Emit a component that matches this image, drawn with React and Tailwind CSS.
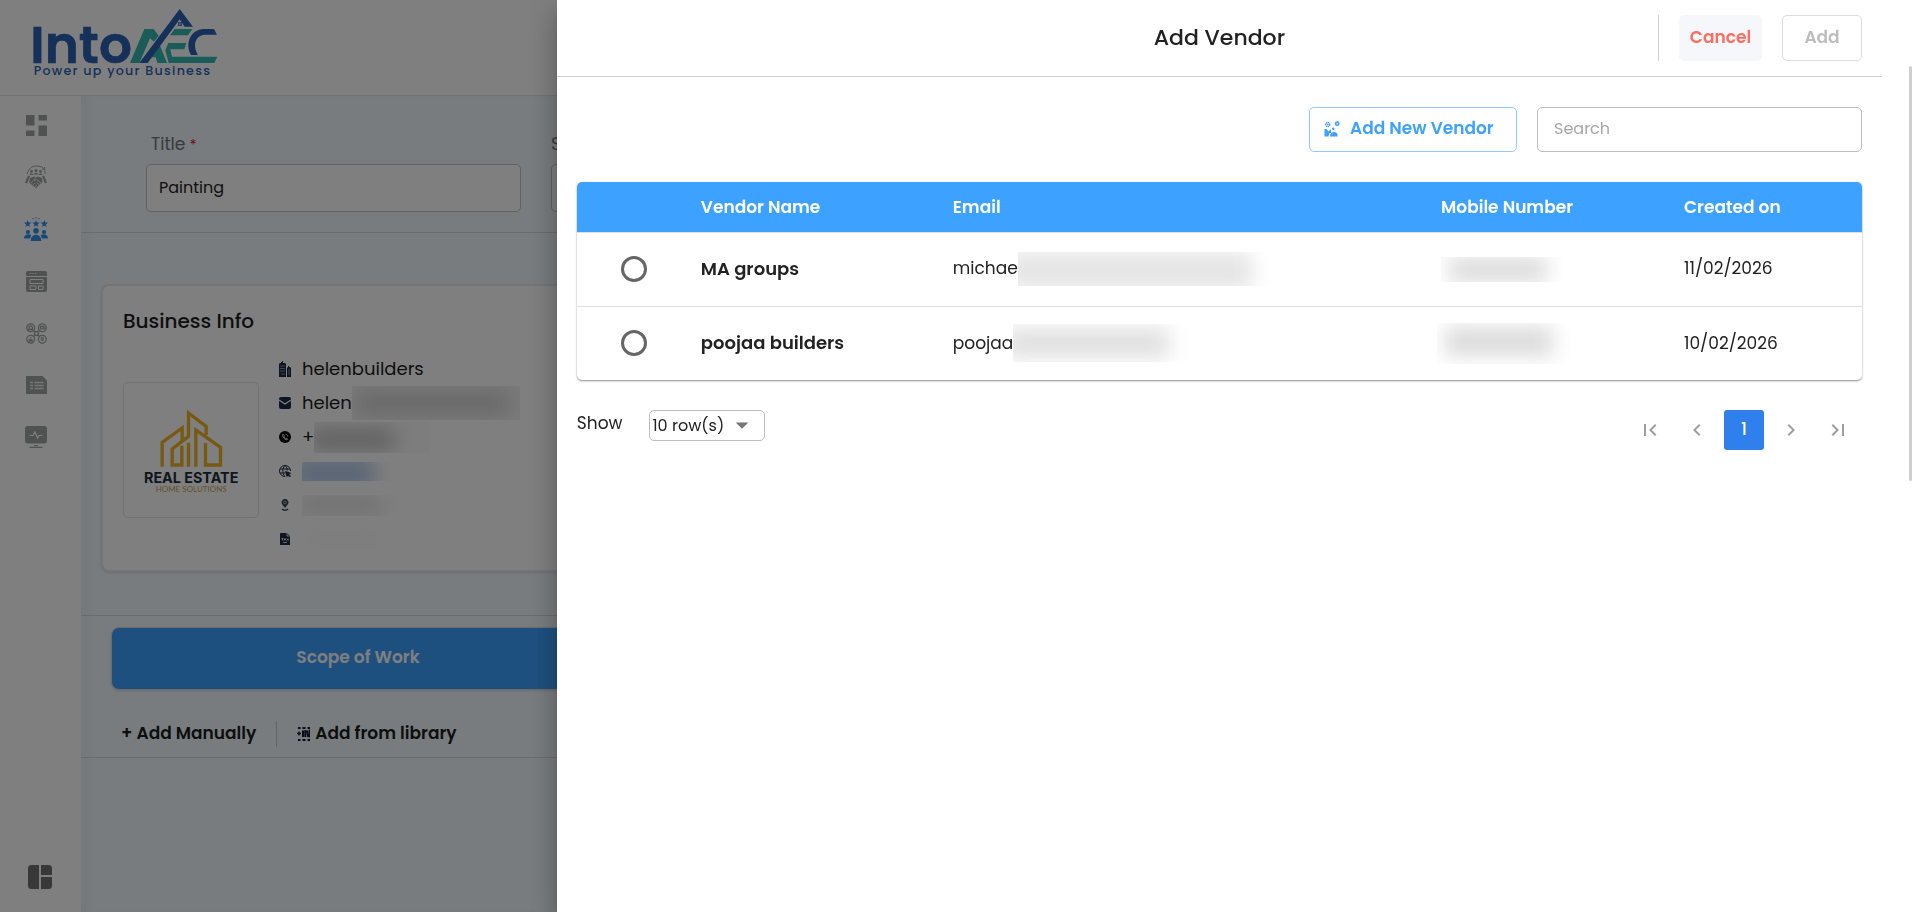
import { useState } from 'react'
import { MdFirstPage, MdLastPage, MdChevronLeft, MdChevronRight, MdArrowDropDown } from 'react-icons/md'

function BrandLogo() {
  return (
    <svg viewBox="90 15 570 225" className="w-[190px] h-[75px]" role="img" aria-label="IntoAEC">
      <text x="91" y="188" fontSize="155" fontWeight="600" fill="#2b63b4" stroke="#2b63b4" strokeWidth="2" fontFamily="Poppins, Inter, sans-serif">Into</text>
      <g fill="#34b8ae">
        <path d="M390 189 433 87h28l15 20-14 18-12-10-32 74z" />
        <path d="m474 122 27 67h-29l-5-17h-22l14-19h10l-6-14z" />
        <path d="M524 87h53l-13 19h-54zM505 129h54l-6 19h-42l5 22h136l-9 19H506l-10-38z" />
      </g>
      <g fill="#2b63b4">
        <path d="m418 189 121-162 40 53h-25l-15-22-96 131z" />
        <path d="m651 104-9-17h-31c-40 2-57 44-38 78h21c-16-28-10-58 20-61z" />
        <path d="M534 66h5v5h-5zM541 66h5v5h-5zM534 73h5v5h-5zM541 73h5v5h-5z" />
      </g>
      <text x="101" y="225" fontSize="38" fontWeight="500" fill="#2b63b4" fontFamily="Poppins, Inter, sans-serif" className="tracking-widest">Power up your Business</text>
    </svg>
  )
}

function DashboardIcon() {
  return (
    <svg viewBox="0 0 21 21" className="w-[21px] h-[21px]" fill="currentColor">
      <rect width="8.500" height="10.500" rx=".6" />
      <rect x="12.500" width="8.500" height="5.500" rx=".6" />
      <rect y="15.500" width="8.500" height="5.500" rx=".6" />
      <rect x="12.500" y="10.500" width="8.500" height="10.500" rx=".6" />
    </svg>
  )
}

function PartnersIcon() {
  return (
    <svg viewBox="0 0 24 24" className="w-6 h-6" fill="currentColor">
      <path d="M3 9C5 3 8 1 12 1c4 0 7 1 8 3M21 9c0-2 0-3-1-5l1-2M20 4l-2 0" fill="none" stroke="currentColor" />
      <circle cx="7.500" cy="6.500" r="1.400" />
      <circle cx="12" cy="5.500" r="1.500" />
      <circle cx="16.500" cy="6.500" r="1.400" />
      <path d="M5.500 10c0-2 4-2 4 0zM10 9.500c0-2.500 4-2.500 4 0zM14.500 10c0-2 4-2 4 0zM4 10.500l2 1-3 7-2-1zM20 10.500l-2 1 3 7 2-1z" />
      <path d="M6 13l4-1.500 2 .8 2-.8 4 1.500.5 4-6.500 6L5 17.500z" />
      <path d="M12 12.500 9.500 15c1 1 2 .5 3-.5l5 4M7 18l2-2M9 20l2-2M11 22l2-2M13 18l2.500 2" fill="none" stroke="#fff" strokeWidth=".8" />
    </svg>
  )
}

function VendorsIcon() {
  const star = 'M0-3.600 1-1.100l2.700.1L1.600.8l.7 2.600L0 1.900l-2.300 1.500.7-2.600L-3.700-1-1-1.100z'
  return (
    <svg viewBox="0 0 24 24" className="w-6 h-6" fill="currentColor">
      <path d={star} transform="translate(3.700 6.600)" />
      <path d={star} transform="translate(12 6.600)" />
      <path d={star} transform="translate(20.300 6.600)" />
      <path d="M12 .300v1.500M8.500 1l.8 1.300M15.500 1l-.8 1.300" stroke="currentColor" />
      <circle cx="3.900" cy="15" r="2.100" />
      <circle cx="20.100" cy="15" r="2.100" />
      <circle cx="12" cy="13.800" r="2.800" />
      <path d="M0 21.500c0-5 6.500-5 7.200-3L6 21.500zM24 21.500c0-5-6.500-5-7.200-3l1.200 3zM6.700 24c0-8.500 10.600-8.500 10.600 0z" />
    </svg>
  )
}

function LayoutIcon() {
  return (
    <svg viewBox="0 0 21 21" className="w-[21px] h-[21px]">
      <path d="M2 0h17a2 2 0 0 1 2 2v17a2 2 0 0 1-2 2H2a2 2 0 0 1-2-2V2a2 2 0 0 1 2-2z" fill="currentColor" />
      <path d="M0 5.500h21M4 2.500h1.200M6.500 2.500h1.200M9 2.500h1.200" stroke="#fff" />
      <path d="M4 8.500h13v4H4zM4 15h6v3.500H4zM12.500 15H17v3.500h-4.500z" fill="none" stroke="#fff" />
    </svg>
  )
}

function NetworkIcon() {
  return (
    <svg viewBox="0 0 21 21" className="w-[21px] h-[21px]" fill="none" stroke="currentColor" strokeWidth="1.300">
      <circle cx="4.700" cy="4.700" r="3.900" />
      <circle cx="16.300" cy="4.700" r="3.900" />
      <circle cx="4.700" cy="16.300" r="3.900" />
      <circle cx="16.300" cy="16.300" r="3.900" />
      <circle cx="10.500" cy="10.500" r="2" />
      <path d="m7.500 7.500 1.500 1.500m4.500-1.500L12 9M7.500 13.500 9 12m4.500 1.500L12 12" />
      <path d="M3 6.500V4l1.700-1.500L6.400 4v2.500zM14.500 3.500h3.600v2.400h-3.600zM3 18c0-2.500 3.400-2.500 3.400 0zM4.700 14v1M14.800 15h3M14.800 17h3" />
    </svg>
  )
}

function SheetIcon() {
  return (
    <svg viewBox="0 0 21 18" className="w-[21px] h-[18px]">
      <path d="M0 0h16.500L21 4.500V18H0z" fill="currentColor" />
      <path d="M4 6.500h3M4 9.500h3M4 12.500h3M8.500 6.500h9M8.500 9.500h9M8.500 12.500h9" stroke="#fff" strokeWidth="1.500" opacity=".8" />
    </svg>
  )
}

function MonitorIcon() {
  return (
    <svg viewBox="0 0 22 22" className="w-[22px] h-[22px]" fill="none">
      <rect width="22" height="17.500" rx="2.500" fill="currentColor" />
      <path d="M4.500 9.500h3.500l2-3.500 2.500 6 1.500-2.500h3.500" stroke="#fff" strokeWidth="1.200" />
      <path d="M9 19.500h4M4.500 21.300h13" stroke="currentColor" strokeWidth="1.200" />
    </svg>
  )
}

function PanelIcon() {
  return (
    <svg viewBox="0 0 24 24" className="w-6 h-6" fill="currentColor">
      <path d="M3.500 0H11v24H3.500A3.500 3.500 0 0 1 0 20.500v-17A3.500 3.500 0 0 1 3.500 0zM13 0h7.500A3.500 3.500 0 0 1 24 3.500V10H13zM13 12h11v8.500a3.500 3.500 0 0 1-3.500 3.500H13z" />
    </svg>
  )
}

function CompanyLogo() {
  return (
    <svg viewBox="150 400 305 270" className="w-[102px] h-[90px]" role="img" aria-label="Real Estate Home Solutions">
      <g fill="none" stroke="#f0b323" strokeWidth="10">
        <path d="M216 585v-73l60-43v38" />
        <path d="M275 522v58h-29v-48l49-38v-70l53 40v26" />
        <path d="M295 585v-72M317 585V475l74 52v53h-45v-66" />
      </g>
      <text x="303" y="633" fontSize="43" fontWeight="700" textAnchor="middle" fill="#1c2f3d" fontFamily="Inter, sans-serif">REAL ESTATE</text>
      <text x="303" y="660" fontSize="24" textAnchor="middle" fill="#c8a458" fontFamily="Lato, sans-serif">HOME SOLUTIONS</text>
    </svg>
  )
}

function BuildingIcon() {
  return (
    <svg viewBox="0 0 12 16" className="w-3 h-4">
      <path d="M0 16V3l1-1h1V1h1V0h1v2h2l1 1v13zM8 16V7l1-1V5h1v1h1l1 1v9z" fill="#1d2b45" />
      <path d="M1 5h5M1 7.500h5M1 10h5M9 9h2M9 11h2M2 13h4M9 13h2" stroke="#8f9aad" strokeWidth=".9" />
    </svg>
  )
}

function MailIcon() {
  return (
    <svg viewBox="0 0 12 12" className="w-3 h-3">
      <rect width="12" height="12" rx="2" fill="#1d2b45" />
      <path d="m0 3 6 4 6-4" fill="none" stroke="#fff" strokeWidth="1.200" />
    </svg>
  )
}

function PhoneIcon() {
  return (
    <svg viewBox="0 0 12 12" className="w-3 h-3">
      <circle cx="6" cy="6" r="6" />
      <path d="M4 3.300c-.8.8 0 3 1.200 4.200S8 9.300 8.700 8.300L7.400 7l-.9.400c-.7-.4-1.200-1-1.400-1.700l.5-.8zM6.500 3.200c1.300 0 2.300 1 2.300 2.400" fill="none" stroke="#fff" strokeWidth=".9" />
    </svg>
  )
}

function WebIcon() {
  return (
    <svg viewBox="0 0 12 12" className="w-3 h-3" fill="none" stroke="#1d2b45">
      <path d="M11.500 6A5.500 5.500 0 1 0 6 11.500M6 .500c-3 3-3 8 0 11M6 .500c1.500 1.500 2.200 3 2.300 5M1 4h10M1 8h5" />
      <path d="m6.500 6.500 5 1.800-2 .9 2 2-.8.700-2-2-.7 1.500z" fill="#1d2b45" />
    </svg>
  )
}

function PinIcon() {
  return (
    <svg viewBox="0 0 12 12" className="w-3 h-3">
      <path d="M6 9 3.300 5.500a3.400 3.400 0 1 1 5.400 0z" fill="#3c4558" />
      <circle cx="6" cy="3.500" r="1.300" fill="none" stroke="#b9c0cc" strokeWidth=".8" />
      <path d="M3 10c1.500 1.600 4.500 1.600 6 0" fill="none" stroke="#3c4558" strokeWidth="1.500" />
    </svg>
  )
}

function TaxIcon() {
  return (
    <svg viewBox="0 0 12 12" className="w-3 h-3">
      <path d="M2 0h6l3 3v9H1V1q0-1 1-1z" fill="#1d2b45" />
      <path d="M8 0v3h3M2.500 5.500h2M3.500 5.500v2M5 7.500l1-2 1 2M8 5.500l1.500 2M9.500 5.500 8 7.500M4 9.500h4" fill="none" stroke="#fff" strokeWidth=".8" />
    </svg>
  )
}

function LibraryIcon() {
  return (
    <svg viewBox="0 0 13 14" className="w-[13px] h-[14px]" fill="none" stroke="#111a2b">
      <path d="M1 1h2.500M5.500 1h3M10.500 1h2.500M1 13h2.500M5.500 13h3M10.500 13h2.500" strokeWidth="2" />
      <path d="M0 6.500h4M2 4.500v4" strokeWidth="1.400" />
      <path d="M6 3.500v6.500M8.300 3v7M10.200 3.500l1 6.500" strokeWidth="2" />
      <path d="M12.400 2.500v8" strokeWidth="1.200" />
    </svg>
  )
}

function AddVendorIcon() {
  return (
    <svg viewBox="0 0 16 16" className="w-4 h-4" fill="currentColor">
      <circle cx="3.700" cy="3.500" r="2" fill="none" stroke="currentColor" strokeWidth="1.500" strokeDasharray="1.200 .5" />
      <circle cx="3.700" cy="3.500" r=".8" />
      <circle cx="13.200" cy="2.700" r="1.600" fill="none" stroke="currentColor" strokeWidth="1.600" />
      <circle cx="9.300" cy="7.700" r="1.200" />
      <path d="M.500 8h2l2 2.500L7 8v4h-1.500l-1 3.500h-4zM6 15.500c0-5.500 7-5.500 7.500-2v2z" />
    </svg>
  )
}

// masked-out personal data: a soft bar inside a clipped box
function Redacted({ className, bar }) {
  return (
    <span className={`block overflow-hidden ${className}`}>
      <span className={`block blur-[10px] ${bar}`}></span>
    </span>
  )
}

const navItems = [
  { key: 'dashboard', label: 'Dashboard', icon: DashboardIcon },
  { key: 'partners', label: 'Partners', icon: PartnersIcon },
  { key: 'vendors', label: 'Vendors', icon: VendorsIcon, active: true },
  { key: 'layouts', label: 'Layouts', icon: LayoutIcon },
  { key: 'network', label: 'Network', icon: NetworkIcon },
  { key: 'sheets', label: 'Sheets', icon: SheetIcon },
  { key: 'activity', label: 'Activity', icon: MonitorIcon }
]

const businessInfo = [
  { key: 'name', icon: BuildingIcon, text: 'helenbuilders' },
  { key: 'mail', icon: MailIcon, text: 'helen', box: 'w-[168px] h-[34px] bg-[#f4f4f4]', bar: 'w-[152px] h-[18px] mt-2 ml-1 bg-[#c9c9c9]' },
  { key: 'phone', icon: PhoneIcon, text: '+', box: 'w-[115px] h-[31px] bg-[#fbfbfb]', bar: 'w-[84px] h-[19px] mt-2 -ml-1 bg-[#bcbcbc]' },
  { key: 'web', icon: WebIcon, box: 'w-[88px] h-[19px]', bar: 'w-[80px] h-[31px] -mt-1 -ml-2 bg-[#b4caec]' },
  { key: 'address', icon: PinIcon, box: 'w-[104px] h-[21px]', bar: 'w-[84px] h-[13px] mt-1 -ml-1 bg-[#d6d6d6]' },
  { key: 'tax', icon: TaxIcon, box: 'w-[96px] h-[21px]', bar: 'w-[80px] h-[13px] mt-1 bg-[#fafafa]' }
]

const vendors = [
  {
    id: 'ma',
    name: 'MA groups',
    email: 'michae',
    emailBox: 'w-[250px] h-[34px]',
    emailBar: 'w-[246px] h-[38px] -ml-3 bg-[#e5e5e5]',
    phoneBox: 'w-[120px] h-[25px]',
    phoneBar: 'w-[98px] h-[25px] ml-2 bg-[#dbdbdb]',
    created: '11/02/2026'
  },
  {
    id: 'poojaa',
    name: 'poojaa builders',
    email: 'poojaa',
    emailBox: 'w-[184px] h-[38px]',
    emailBar: 'w-[164px] h-[30px] mt-1 -ml-2 bg-[#e0e0e0]',
    phoneBox: '-ml-1 w-[134px] h-[41px]',
    phoneBar: 'w-[108px] h-[29px] ml-2 mt-1 bg-[#dbdbdb]',
    created: '10/02/2026'
  }
]

function Page() {
  return (
    <div className="min-h-screen flex flex-col bg-white">
      <header className="h-24 border-b border-[#e6e6e6] pl-[30px] pt-[5px]">
        <BrandLogo />
      </header>

      <div className="flex flex-1">
        <nav className="w-[81px] shrink-0 flex flex-col pt-[3px] bg-white">
          {navItems.map((item) => {
            const Icon = item.icon
            return (
              <button
                key={item.key}
                aria-label={item.label}
                className={`h-[52px] w-[72px] flex items-center justify-center ${item.active ? 'text-[#3090f0]' : 'text-[#a0a4a3]'}`}
              >
                <Icon />
              </button>
            )
          })}
          <button aria-label="Toggle panel" className="mt-auto mb-[11px] h-12 w-20 flex items-center justify-center text-[#707070]">
            <PanelIcon />
          </button>
        </nav>

        <main className="flex-1 min-w-0 bg-[#f2f9fd] shadow-[inset_12px_0_16px_-8px_#e3edf5]">
          {/* Title row */}
          <div className="grid grid-cols-4 gap-[30px] pl-[65px] pr-[184px] pt-9 pb-5 border-b border-[#d2d7da]">
            <div className="flex flex-col gap-2">
              <label htmlFor="title" className="pl-[5px] text-[17px] leading-6 text-[#70757a]">
                Title <span className="text-sm text-[#e0102c]">*</span>
              </label>
              <input id="title" defaultValue="Painting" className="h-12 w-full rounded-[5px] border border-[#c4c4c4] bg-white px-3 pb-[2px] text-base text-[#222]" />
            </div>
            <div className="flex flex-col gap-2">
              <label htmlFor="status" className="text-[17px] leading-6 text-[#70757a]">Status</label>
              <input id="status" className="h-12 w-full rounded-[5px] border border-[#c4c4c4] bg-white px-3 pb-[2px] text-base" />
            </div>
          </div>

          {/* Business card */}
          <div className="px-5 pt-[51px] pb-[43px] border-b border-[#d2d7da]">
            <div className="rounded-lg border-2 border-[#e9e9e9] bg-white px-5 pt-5 pb-[14px] shadow-sm">
              <h2 className="text-xl leading-[30px] font-medium text-[#1c1c1c]">Business Info</h2>
              <div className="mt-4 flex items-start gap-5">
                <div className="mt-[30px] w-[136px] h-[136px] rounded-[5px] border border-[#e2e2e2] flex items-center justify-center">
                  <CompanyLogo />
                </div>
                <ul>
                  {businessInfo.map((row) => {
                    const Icon = row.icon
                    return (
                      <li key={row.key} className="h-[34px] flex items-center gap-[11px]">
                        <Icon />
                        <span className="flex items-center text-lg text-[#1c1c1c]">
                          {row.text}
                          {row.box && <Redacted className={row.box} bar={row.bar} />}
                        </span>
                      </li>
                    )
                  })}
                </ul>
              </div>
            </div>
          </div>

          {/* Scope of work */}
          <div className="border-b border-[#d2d7da] pl-[30px] pt-[11px]">
            <button className="w-[494px] h-[63px] pb-[2px] rounded-lg border border-[#d8d8d8] bg-[#3da1ff] text-[17px] font-semibold text-white shadow-sm">Scope of Work</button>
            <div className="h-[47px] mt-5 flex items-center pl-[10px] text-[17px] font-semibold text-[#1c1c1c]">
              <button className="pr-5">+ Add Manually</button>
              <span className="h-[26px] w-px bg-[#c4c9cc]"></span>
              <button className="ml-5 flex items-center gap-[5px]">
                <LibraryIcon />
                Add from library
              </button>
            </div>
          </div>
        </main>
      </div>
    </div>
  )
}

function VendorTable({ selected, onSelect }) {
  return (
    <div className="mt-[30px] rounded-[5px] overflow-hidden shadow-[0_1px_2px_rgba(0,0,0,0.45)]">
      <table className="w-full table-fixed text-left">
        <thead>
          <tr className="h-[50px] bg-[#3da1ff] text-[17px] leading-6 text-white">
            <th className="w-[124px]"><span className="sr-only">Select</span></th>
            <th className="w-[252px] font-semibold">Vendor Name</th>
            <th className="font-semibold">Email</th>
            <th className="w-[243px] font-semibold">Mobile Number</th>
            <th className="w-[178px] font-semibold">Created on</th>
          </tr>
        </thead>
        <tbody>
          {vendors.map((vendor) => (
            <tr key={vendor.id} className="h-[74px] border-t border-[#e0e0e0] text-[17px] text-[#222]">
              <td>
                <input
                  type="radio"
                  name="vendor"
                  aria-label={vendor.name}
                  checked={selected === vendor.id}
                  onChange={() => onSelect(vendor.id)}
                  className="block ml-[44px] w-[26px] h-[26px] appearance-none rounded-full border-[3px] border-[#666] checked:bg-[#3da1ff]"
                />
              </td>
              <td className="text-lg leading-6 font-semibold">{vendor.name}</td>
              <td>
                <div className="flex items-center">
                  {vendor.email}
                  <Redacted className={vendor.emailBox} bar={vendor.emailBar} />
                </div>
              </td>
              <td>
                <Redacted className={vendor.phoneBox} bar={vendor.phoneBar} />
              </td>
              <td>{vendor.created}</td>
            </tr>
          ))}
        </tbody>
      </table>
    </div>
  )
}

function Pagination() {
  return (
    <div className="flex gap-[7px] pr-1 text-[#9e9e9e]">
      <button aria-label="First page" className="w-10 h-10 flex items-center justify-center"><MdFirstPage className="w-6 h-6" /></button>
      <button aria-label="Previous page" className="w-10 h-10 flex items-center justify-center"><MdChevronLeft className="w-6 h-6" /></button>
      <button className="w-10 h-10 rounded-[3px] bg-[#2f80ed] text-[17px] font-medium text-white">1</button>
      <button aria-label="Next page" className="w-10 h-10 flex items-center justify-center"><MdChevronRight className="w-6 h-6" /></button>
      <button aria-label="Last page" className="w-10 h-10 flex items-center justify-center"><MdLastPage className="w-6 h-6" /></button>
    </div>
  )
}

function AddVendorDrawer() {
  const [selected, setSelected] = useState(null)

  return (
    <aside className="fixed inset-y-0 right-0 w-[71%] flex bg-white shadow-[0_8px_10px_-5px_rgba(0,0,0,0.2),0_16px_24px_2px_rgba(0,0,0,0.14),0_6px_30px_5px_rgba(0,0,0,0.12)]">
      <div className="flex-1 min-w-0">
        {/* Header */}
        <div className="h-[77px] grid grid-cols-[1fr_auto_1fr] items-center border-b border-[#cfcfcf]">
          <span></span>
          <h1 className="pb-[2px] text-[22px] font-medium text-[#222]">Add Vendor</h1>
          <div className="flex items-center justify-end gap-5 pr-5">
            <span className="w-px h-[46px] bg-[#cfcfcf]"></span>
            <button className="w-[83px] h-[46px] rounded-[5px] bg-[#f5f7fb] text-[17px] font-semibold text-[#ff6b5e]">Cancel</button>
            <button className="w-20 h-[46px] rounded-[5px] border border-[#dcdcdc] text-[17px] font-semibold text-[#bdbdbd]">Add</button>
          </div>
        </div>

        <div className="px-5 pt-[30px]">
          <div className="flex justify-end gap-5">
            <button className="w-[208px] h-[45px] pl-[14px] pb-[2px] flex items-center gap-[10px] rounded-[5px] border border-[#90caff] text-[17px] font-semibold text-[#3da1ff]">
              <AddVendorIcon />
              Add New Vendor
            </button>
            <input type="search" aria-label="Search" placeholder="Search" className="w-[325px] h-[45px] px-4 pb-[2px] rounded-[5px] border border-[#bdbdbd] text-base placeholder:text-[#a6a6a6]" />
          </div>

          <VendorTable selected={selected} onSelect={setSelected} />

          {/* Footer */}
          <div className="mt-[30px] flex items-start justify-between">
            <div className="flex items-start gap-[26px] text-[17px] text-[#222]">
              <label htmlFor="rows" className="leading-[26px]">Show</label>
              <div className="relative">
                <select id="rows" className="w-[116px] h-[31px] appearance-none rounded-[5px] border border-[#bdbdbd] pl-[3px] text-base bg-white">
                  <option>10 row(s)</option>
                  <option>25 row(s)</option>
                  <option>50 row(s)</option>
                </select>
                <MdArrowDropDown className="absolute right-2 top-0 w-[30px] h-[30px] text-[#757575] pointer-events-none" />
              </div>
            </div>
            <Pagination />
          </div>
        </div>
      </div>

      {/* Scroll track */}
      <div className="w-[38px] shrink-0 flex justify-end pr-2 pt-[66px]">
        <span className="w-[3px] h-[415px] rounded-full bg-[#cfcfcf]"></span>
      </div>
    </aside>
  )
}

function App() {
  return (
    <div className="font-['Poppins','Inter',sans-serif] overflow-hidden">
      <Page />
      <div className="fixed inset-0 bg-black/50"></div>
      <AddVendorDrawer />
    </div>
  )
}

export default App
